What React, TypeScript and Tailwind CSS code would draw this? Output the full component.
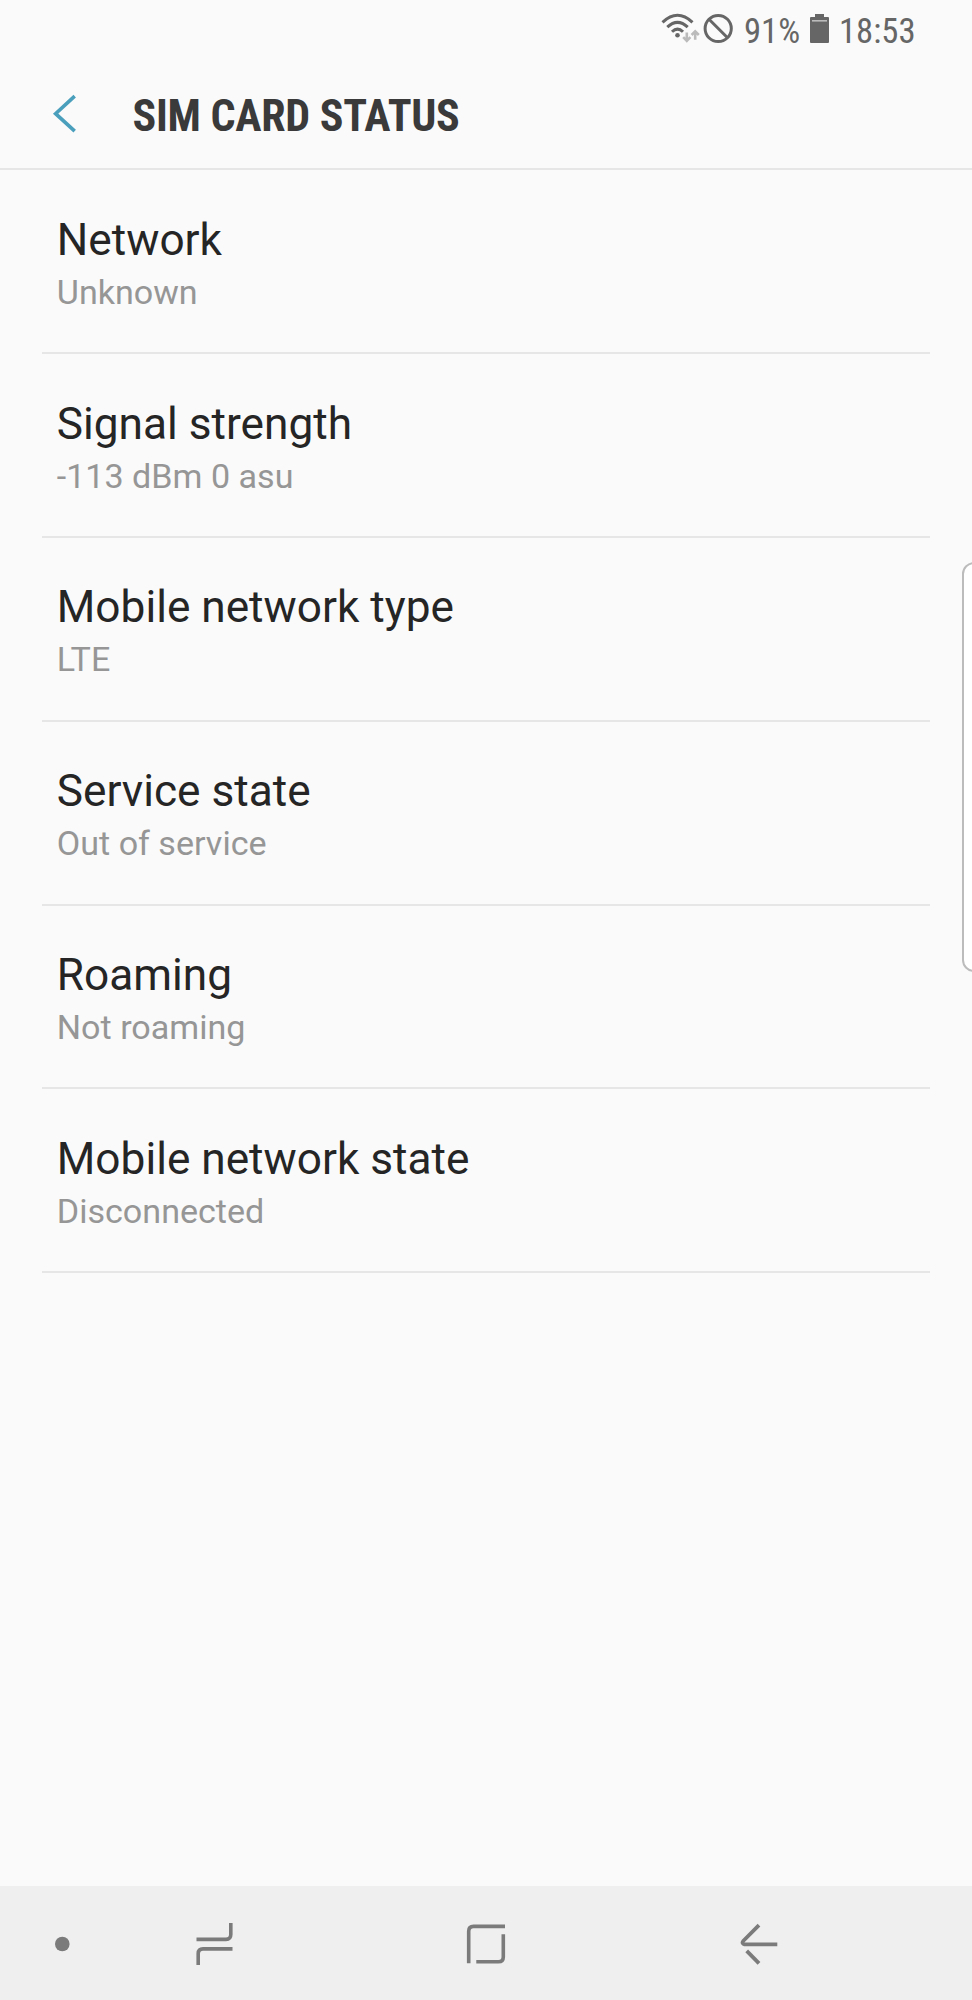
const rows: [string, string][] = [
  ["Network", "Unknown"],
  ["Signal strength", "-113 dBm 0 asu"],
  ["Mobile network type", "LTE"],
  ["Service state", "Out of service"],
  ["Roaming", "Not roaming"],
  ["Mobile network state", "Disconnected"],
];

function StatusBar() {
  return (
    <div className="flex h-[60px] shrink-0 items-center pl-[660px] font-['Roboto_Condensed','Roboto',sans-serif] text-[34.7px] text-[#666]">
      <svg className="h-[60px] w-[41px] shrink-0" viewBox="660 0 41 60" fill="none" stroke="#666" strokeWidth="3">
        <path d="M662.5 22.3Q677.5 8.3 692.5 22.3" />
        <path d="M667.3 27.2Q677.5 17.4 687.7 27.2" />
        <path d="M672 31.8Q677.5 26.4 683 31.8" />
        <circle cx="677.5" cy="35.3" r="2.3" fill="#666" stroke="none" />
        <g stroke="#bbb" strokeWidth="2.6">
          <path d="M686.8 32.5V41M683.2 37.2L686.8 40.8L690.4 37.2" />
          <path d="M695.2 39.8V31.5M691.6 35L695.2 31.4L698.8 35" />
        </g>
      </svg>
      <svg className="h-[60px] w-[34px] shrink-0" viewBox="701 0 34 60" fill="none" stroke="#666" strokeWidth="3">
        <circle cx="718.2" cy="28.5" r="13.1" />
        <path d="M709 19.3L727.5 37.8" />
      </svg>
      <span className="ml-[9px] w-[64px] shrink-0 pt-[2px]">91%</span>
      <svg className="h-[60px] w-[23px] shrink-0" viewBox="808 0 23 60" fill="#666">
        <path d="M815 14h9v3h4q1 0 1 1v24q0 1-1 1h-17q-1 0-1-1V18q0-1 1-1h4z" />
        <path d="M812 20h15v1.6h-15z" fill="#bbb" />
      </svg>
      <span className="ml-[8px] pt-[2px]">18:53</span>
    </div>
  );
}

function EdgeHandle() {
  return <div className="absolute top-[562px] -right-[10px] h-[410px] w-[20px] rounded-l-[12px] border-2 border-[#bcbcbc] bg-white" />;
}

function NavigationBar() {
  return (
    <footer className="flex h-[114px] shrink-0 items-center bg-[#efefef] pt-[2px]">
      <svg className="ml-[54px] size-4" viewBox="0 0 16 16">
        <circle cx="8.3" cy="8" r="7.3" fill="#7b7b7b" />
      </svg>
      <svg className="ml-[124px] h-[44px] w-[40px]" viewBox="194 1922 40 44" fill="none" stroke="#7b7b7b" strokeWidth="3.6">
        <path d="M196.5 1939.4H226Q230.8 1939.4 230.8 1934.6V1923" />
        <path d="M232.5 1948.9H203Q198.2 1948.9 198.2 1953.7V1965" />
      </svg>
      <svg className="ml-[232px] h-[44px] w-[40px]" viewBox="466 1922 40 44" fill="none" stroke="#7b7b7b" strokeWidth="3.6">
        <path d="M505 1926.4H473.5Q468.7 1926.4 468.7 1931.2V1963.3" />
        <path d="M476.3 1961.7H498.5Q503.3 1961.7 503.3 1956.9V1934.3" />
      </svg>
      <svg className="ml-[234px] h-[44px] w-[40px]" viewBox="740 1922 40 44" fill="none" stroke="#7b7b7b" strokeWidth="3.8">
        <path d="M777.3 1944.3H744.5Q741.4 1943.5 743.2 1941L759 1925.2" strokeLinejoin="round" />
        <path d="M746.7 1950.8L759 1963.3" />
      </svg>
    </footer>
  );
}

export default function App() {
  return (
    <div className="relative flex h-[2000px] w-[972px] flex-col overflow-hidden bg-[#fafafa] font-['Roboto',sans-serif]">
      <StatusBar />
      <header className="flex h-[110px] shrink-0 items-center border-b-2 border-[#e6e6e6]">
        <svg className="ml-[50px] h-[44px] w-[30px] shrink-0" viewBox="50 92 30 44" fill="none" stroke="#4a9fbd" strokeWidth="3.6">
          <path d="M74.7 96.2L55.6 113.7L74.7 131.2" />
        </svg>
        <h1 className="ml-[52.5px] pt-[3px] font-['Roboto_Condensed','Roboto',sans-serif] text-[44px] font-bold tracking-[-0.28px] text-[#3a3a3a]">
          SIM CARD STATUS
        </h1>
      </header>
      <main className="flex grow flex-col px-[42px]">
        {rows.map(([title, value]) => (
          <div key={title} className="h-[183.9px] border-b-2 border-[#e6e6e6] pt-[39.7px] pl-[14.8px]">
            <div className="w-fit text-[44.2px] leading-[60px] text-[#252525]">{title}</div>
            <div className="w-fit text-[34.1px] leading-[45.6px] text-[#969696]">{value}</div>
          </div>
        ))}
      </main>
      <NavigationBar />
      <EdgeHandle />
    </div>
  );
}
